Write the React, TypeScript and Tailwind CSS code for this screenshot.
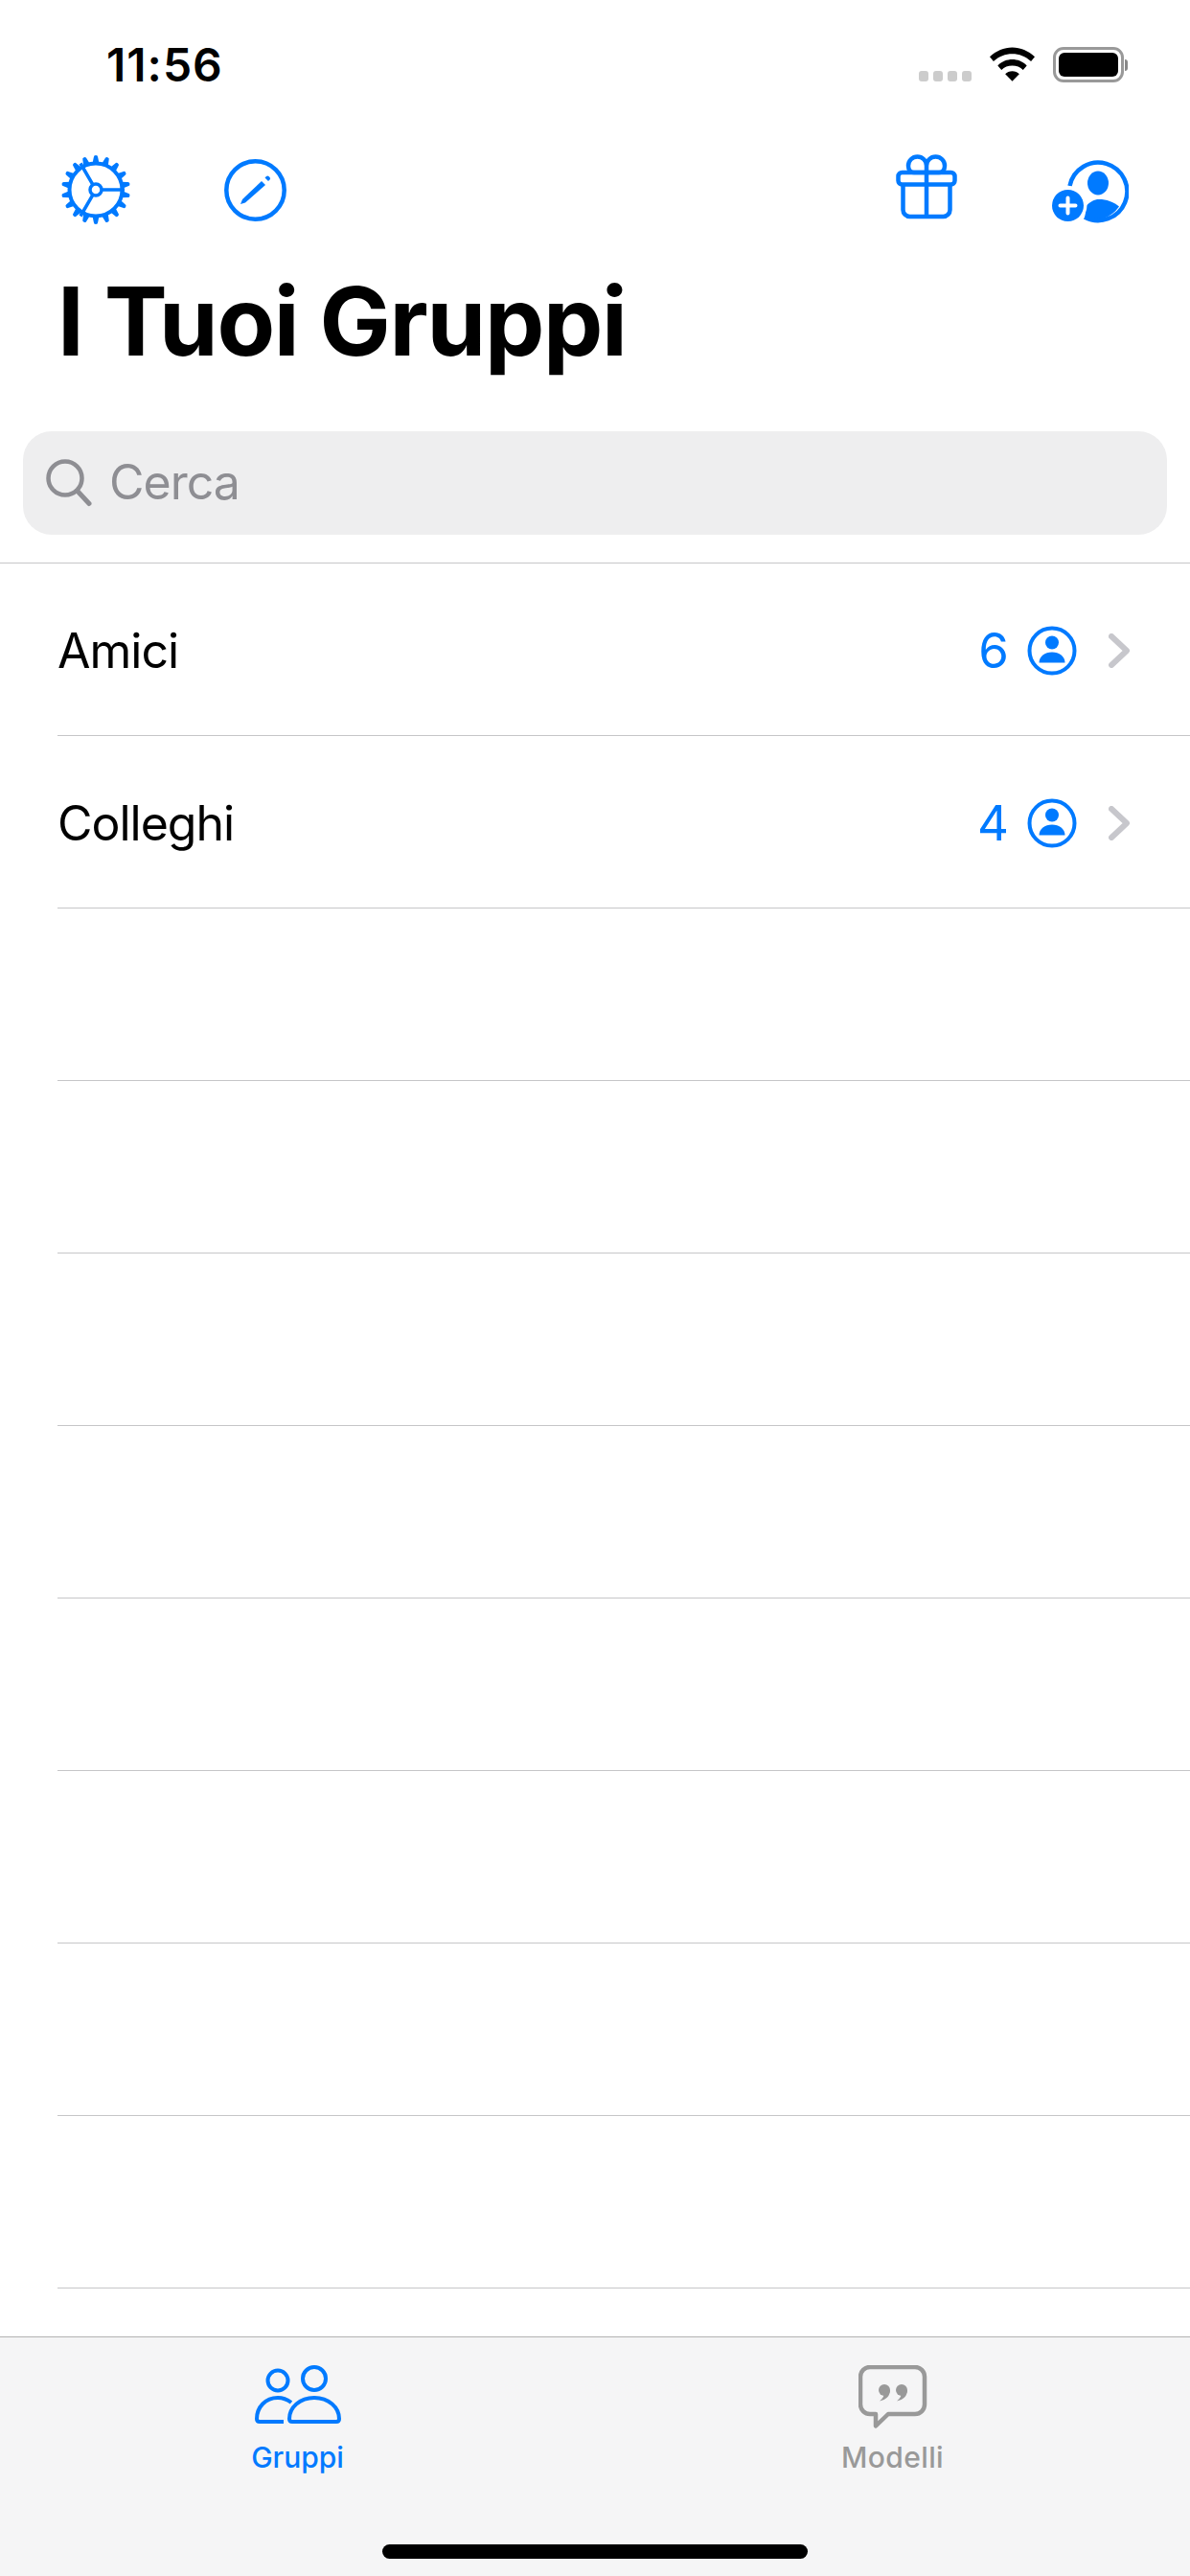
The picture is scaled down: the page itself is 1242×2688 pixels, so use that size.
const BLUE = '#007aff';

function Gear() {
  const teeth = Array.from({ length: 18 }, (_, i) => i * 20);
  return (
    <svg width="72" height="72" viewBox="0 0 72 72" className="block">
      <circle cx="36" cy="36" r="27.500" fill="none" stroke={BLUE} strokeWidth="4" />
      {teeth.map((a) => (
        <path key={a} d="M32.500 8.500L33.800 2.200a2.200 2.200 0 0 1 4.400 0L39.500 8.500z" fill={BLUE} transform={`rotate(${a} 36 36)`} />
      ))}
      <circle cx="36" cy="36" r="6" fill="none" stroke={BLUE} strokeWidth="3.500" />
      <path d="M42 36H66M33 30.800L20 8.500M33 41.200L20 63.500" fill="none" stroke={BLUE} strokeWidth="3.500" />
    </svg>
  );
}

function PencilCircle() {
  return (
    <svg width="65" height="65" viewBox="0 0 65 65" className="block">
      <circle cx="32.500" cy="32.500" r="30.200" fill="none" stroke={BLUE} strokeWidth="4.500" />
      <path d="M17 47l2-5L39 23l4 4L22 45.500z" fill={BLUE} />
      <path d="M42.500 19.500l1.500-1.500a1.800 1.800 0 0 1 2.500 0l1 1a1.800 1.800 0 0 1 0 2.500l-1.500 1.500z" fill={BLUE} />
    </svg>
  );
}

function Gift() {
  return (
    <svg width="64" height="68" viewBox="0 0 64 68" className="block" fill="none" stroke={BLUE} strokeWidth="4.500">
      <rect x="2.500" y="19" width="59" height="12.500" rx="4" />
      <path d="M7.500 31.500V58a7 7 0 0 0 7 7h35a7 7 0 0 0 7-7V31.500" />
      <path d="M32 19v46" />
      <path d="M32 19v-7a9.500 9.500 0 1 0-19 0c0 4 2.500 7 6 7zM32 19v-7a9.500 9.500 0 1 1 19 0c0 4-2.500 7-6 7z" />
    </svg>
  );
}

function PersonAdd() {
  return (
    <svg width="80" height="66" viewBox="0 0 80 66" className="block">
      <path d="M36 47.500c4-4 8-6.500 13-6.500 8 0 15 2.500 21 7.500A32 32 0 0 1 34 61z" fill={BLUE} />
      <path d="M18.500 27A30.200 30.200 0 1 1 34 59.500" fill="none" stroke={BLUE} strokeWidth="4.500" />
      <ellipse cx="48" cy="24" rx="11" ry="12.500" fill={BLUE} />
      <circle cx="16.500" cy="47" r="20" fill="#fff" />
      <circle cx="16.500" cy="47.500" r="16.500" fill={BLUE} />
      <path d="M16.500 39.500v16M8.500 47.500h16" stroke="#fff" strokeWidth="4" strokeLinecap="round" />
    </svg>
  );
}

function Magnifier() {
  return (
    <svg width="48" height="50" viewBox="0 0 48 50" className="block" fill="none" stroke="#8e8e93" strokeWidth="4.500">
      <circle cx="20" cy="20" r="17.500" />
      <path d="M32.500 33L45 46.500" strokeLinecap="round" strokeWidth="5" />
    </svg>
  );
}

function PersonCircle() {
  return (
    <svg width="52" height="52" viewBox="0 0 52 52" className="block">
      <circle cx="26" cy="26" r="23.500" fill="none" stroke={BLUE} strokeWidth="4" />
      <circle cx="26" cy="17.500" r="7" fill={BLUE} />
      <path d="M12.500 38.500c0-6.500 6-11 13.500-11s13.500 4.500 13.500 11z" fill={BLUE} />
    </svg>
  );
}

function Chevron() {
  return (
    <svg width="22" height="36" viewBox="0 0 22 36" className="block" fill="none" stroke="#c7c7cc" strokeWidth="6" strokeLinecap="round" strokeLinejoin="round">
      <path d="M3 3l16 15L3 33" />
    </svg>
  );
}

function People() {
  return (
    <svg width="92" height="62" viewBox="0 0 92 62" className="block" fill="none" stroke={BLUE} strokeWidth="4">
      <circle cx="25" cy="16" r="10.500" />
      <circle cx="63" cy="14" r="12" />
      <path d="M39 39c-4-3-9-5-14-5C12 34 3 44 3 56c0 2 1 3 3 3h25" />
      <path d="M40 59c-2 0-3-1-3-3 0-12 11-22 26-22s26 10 26 22c0 2-1 3-3 3z" />
    </svg>
  );
}

function Quote() {
  return (
    <svg width="72" height="68" viewBox="0 0 72 68" className="block">
      <path d="M12 51A10 10 0 0 1 2 41V12A10 10 0 0 1 12 2h47a10 10 0 0 1 10 10v29a10 10 0 0 1-10 10H31L18 63.500V51z" fill="none" stroke="#999" strokeWidth="4.500" strokeLinejoin="round" />
      <circle cx="27" cy="26" r="6" fill="#999" />
      <circle cx="45" cy="26" r="6" fill="#999" />
      <path d="M33 26c0 6-4 10-11 11.500 3-2.500 5-5.500 5-9zM51 26c0 6-4 10-11 11.500 3-2.500 5-5.500 5-9z" fill="#999" />
    </svg>
  );
}

function Wifi() {
  return (
    <svg width="47" height="36" viewBox="0 0 48 36" className="block" fill="#000">
      <path d="M24 0c9 0 17 3.500 24 10l-4 5C38 9.500 31.500 7 24 7S10 9.500 4 15L0 10C7 3.500 15 0 24 0z" />
      <path d="M24 13c5.500 0 11 2 15.500 6.500l-4 4.500C32.500 21 28.500 19.500 24 19.500S15.500 21 12.500 24l-4-4.500C13 15 18.500 13 24 13z" />
      <path d="M24 25.500c3 0 5.500 1 7.500 3L24 36l-7.500-7.500c2-2 4.500-3 7.500-3z" />
    </svg>
  );
}

function Battery() {
  return (
    <div className="flex items-center">
      <div className="h-[37px] w-[74px] rounded-[11px] border-[3px] border-[#999] p-[3px]">
        <div className="h-full w-full rounded-[6px] bg-black" />
      </div>
      <div className="ml-[1px] h-[12px] w-[3px] rounded-r-[3px] bg-[#888]" />
    </div>
  );
}

function GroupRow({ name, count }: { name?: string; count?: number }) {
  return (
    <div className="ml-[60px] box-border h-[180px] border-b border-[#c6c6c8]">
      {name ? (
        <div className="flex h-full items-center justify-between pr-[63px] pt-[2px]">
          <span className="text-[50px] leading-none tracking-[-1px] text-black">{name}</span>
          <div className="flex items-center">
            <span className="text-[51px] leading-none text-[#007aff]">{count}</span>
            <div className="ml-[19px]"><PersonCircle /></div>
            <div className="ml-[33px]"><Chevron /></div>
          </div>
        </div>
      ) : null}
    </div>
  );
}

export default function App() {
  return (
    <div className="flex h-[2688px] w-[1242px] flex-col overflow-hidden bg-white font-['Inter',sans-serif]">
      <div className="flex h-[132px] shrink-0 items-start justify-between pl-[111px] pr-[65px] pt-[44px]">
        <span className="text-[48px] font-semibold leading-[48px] tracking-[1px] text-black">11:56</span>
        <div className="flex items-start pt-[5px]">
          <div className="mt-[25px] flex gap-[5px]">
            {[0, 1, 2, 3].map((i) => (
              <div key={i} className="h-[11px] w-[10px] rounded-[3px] bg-[#ccc]" />
            ))}
          </div>
          <div className="ml-[19px]"><Wifi /></div>
          <div className="ml-[19px]"><Battery /></div>
        </div>
      </div>

      <div className="flex h-[132px] shrink-0 items-start justify-between px-[64px]">
        <div className="flex items-start gap-[98px]">
          <div className="mt-[30px]"><Gear /></div>
          <div className="mt-[34px]"><PencilCircle /></div>
        </div>
        <div className="flex items-start gap-[99px]">
          <div className="mt-[29px]"><Gift /></div>
          <div className="mt-[35px]"><PersonAdd /></div>
        </div>
      </div>

      <h1 className="mt-[22px] h-[164px] shrink-0 pl-[60px] text-[99px] font-bold leading-[99px] tracking-[-1.3px] text-black">
        I Tuoi Gruppi
      </h1>

      <div className="mx-[24px] flex h-[108px] shrink-0 items-center rounded-[30px] bg-[#eeeeef] pl-[24px]">
        <Magnifier />
        <span className="mb-[2px] ml-[18px] text-[50px] leading-none tracking-[-1px] text-[#8e8e93]">Cerca</span>
      </div>

      <div className="mt-[29px] min-h-0 flex-1 border-t border-[#c6c6c8]">
        <GroupRow name="Amici" count={6} />
        <GroupRow name="Colleghi" count={4} />
        {[0, 1, 2, 3, 4, 5, 6, 7].map((i) => (
          <GroupRow key={i} />
        ))}
      </div>

      <div className="flex h-[250px] shrink-0 flex-col border-t border-[#b2b2b2] bg-[#f5f5f6]">
        <div className="grid flex-1 grid-cols-2">
          <div className="flex flex-col items-center pt-[29px]">
            <People />
            <span className="mt-[19px] text-[30px] font-medium leading-none text-[#007aff]">Gruppi</span>
          </div>
          <div className="flex flex-col items-center pt-[29px]">
            <Quote />
            <span className="mt-[13px] text-[30px] font-medium leading-none tracking-[0.4px] text-[#999]">Modelli</span>
          </div>
        </div>
        <div className="mb-[18px] h-[15px] w-[444px] self-center rounded-full bg-black" />
      </div>
    </div>
  );
}
